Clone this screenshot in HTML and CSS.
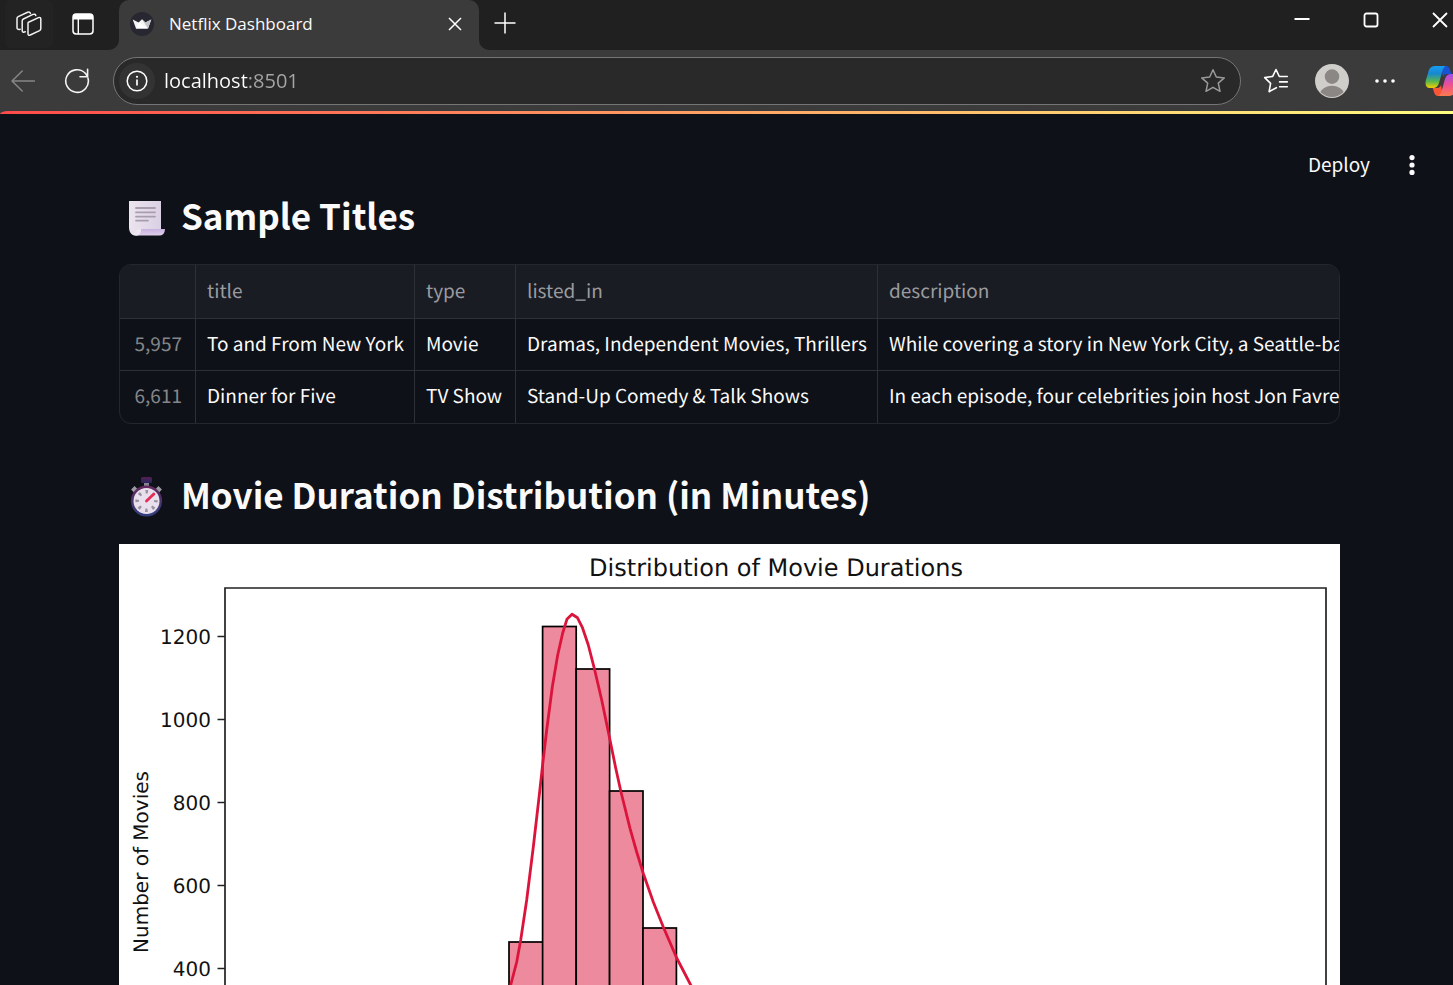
FILE: index.html
```html
<!DOCTYPE html>
<html lang="en">
<head>
<meta charset="utf-8">
<meta name="viewport" content="width=device-width, initial-scale=1">
<title>Netflix Dashboard</title>
<link rel="stylesheet" href="styles.css">
</head>
<body>
<header class="browser">
  <div class="tabstrip">
    <div class="tabstrip-left">
      <button class="icon-btn workspace" aria-label="Workspaces">
        <svg width="26" height="26" viewBox="0 0 26 26" fill="none" stroke="#f2f2f2" stroke-width="1.5" stroke-linejoin="round" stroke-linecap="round"><path d="M12.5 11.2 L22.5 6.6 Q24.8 5.9 24.8 8 V17.5 Q24.8 19 23.6 19.6 L14.2 24 Q12 24.8 12 22.8 V12.8 Q12 11.6 12.5 11.2Z"/><path d="M9.3 20.8 Q6.2 22 6.2 19.4 V10 Q6.2 8.6 7.4 8 L17 3.4 Q19.4 2.6 19.8 4.6"/><path d="M4.2 18.2 Q1 19 1 16.4 V7.6 Q1 6.2 2.2 5.6 L11.6 1.3 Q14 .6 14.4 2.4"/></svg>
      </button>
      <button class="icon-btn" aria-label="Tab actions">
        <svg width="22" height="22" viewBox="0 0 22 22"><rect x="1" y="1" width="20" height="20" rx="3.2" fill="none" stroke="#fff" stroke-width="1.5"/><path d="M1 6.5V4Q1 1 4 1H18Q21 1 21 4V6.5Z" fill="#fff"/><path d="M6.3 6V21" stroke="#fff" stroke-width="1.4"/></svg>
      </button>
    </div>
    <div class="tab">
      <svg width="24" height="24" viewBox="0 0 24 24"><circle cx="12" cy="12" r="12" fill="#262730"/><path d="M2.7 7.4 8.6 10.6 12 7.2 15.4 10.6 21.3 7.4 18 16.6H6Z" fill="#f4f4f4"/><path d="M12 7.2 15.4 10.6 21.3 7.4 18 16.6Z" fill="#c4c4c6"/><path d="M8.6 10.6 18 16.6H6Z" fill="#fff"/></svg>
      <span class="tab-title">Netflix Dashboard</span>
      <button class="icon-btn tab-close" aria-label="Close tab"><svg width="14" height="14" viewBox="0 0 14 14" stroke="#fff" stroke-width="1.5"><path d="M1 1 13 13M13 1 1 13"/></svg></button>
    </div>
    <div class="tabstrip-rest">
      <button class="icon-btn" aria-label="New tab"><svg width="22" height="22" viewBox="0 0 22 22" stroke="#fff" stroke-width="1.5"><path d="M11 .5V21.5M.5 11H21.5"/></svg></button>
      <div class="window-controls">
        <button class="icon-btn" aria-label="Minimize"><svg width="16" height="16" viewBox="0 0 16 16"><path d="M.5 7H15.5" stroke="#fff" stroke-width="2"/></svg></button>
        <button class="icon-btn" aria-label="Maximize"><svg width="16" height="16" viewBox="0 0 16 16"><rect x="1.5" y="1.5" width="13" height="13" rx="2" fill="none" stroke="#fff" stroke-width="1.8"/></svg></button>
        <button class="icon-btn" aria-label="Close window"><svg width="16" height="16" viewBox="0 0 16 16" stroke="#fff" stroke-width="1.8"><path d="M1 1 15 15M15 1 1 15"/></svg></button>
      </div>
    </div>
  </div>
  <div class="toolbar">
    <button class="icon-btn" aria-label="Back"><svg width="24" height="22" viewBox="0 0 24 22" fill="none" stroke="#868686" stroke-width="1.5" stroke-linecap="round" stroke-linejoin="round"><path d="M11.2 1 1 11 11.2 21M1 11H23.5"/></svg></button>
    <button class="icon-btn reload" aria-label="Reload"><svg width="26" height="26" viewBox="0 0 26 26" fill="none" stroke="#f4f4f4" stroke-width="1.6" stroke-linecap="round"><path d="M24 10.2A11.3 11.3 0 1 1 21.3 5.3L23.4 8.2M16 8.8H23.6V1.3"/></svg></button>
    <div class="address">
      <button class="icon-btn site-info" aria-label="Site information"><svg width="22" height="22" viewBox="0 0 22 22"><circle cx="11" cy="11" r="9.8" fill="none" stroke="#fff" stroke-width="1.5"/><path d="M11 9.6V15.5" stroke="#fff" stroke-width="1.7"/><circle cx="11" cy="6.8" r="1.1" fill="#fff"/></svg></button>
      <input class="address-input" type="text" value="localhost:8501" aria-label="Address">
      <button class="icon-btn" aria-label="Add to favorites"><svg width="26" height="26" viewBox="0 0 26 26" fill="none" stroke="#9a9a9a" stroke-width="1.5" stroke-linejoin="round"><path d="M13 1.8 16.3 9 24.3 9.9 18.3 15.1 20 23.3 13 19.3 6 23.3 7.7 15.1 1.7 9.9 9.7 9Z"/></svg></button>
    </div>
    <div class="toolbar-right">
      <button class="icon-btn" aria-label="Favorites"><svg width="26" height="26" viewBox="0 0 26 26" fill="none" stroke="#fff" stroke-width="1.6" stroke-linejoin="round" stroke-linecap="round"><path d="M13.4 19.7 6.1 23.7 7.6 15.4 1.7 9.6 9.7 8.4 13 1.5 16.3 8.5H24.3M16.6 13.9H24.3M16.6 18.8H24.3"/></svg></button>
      <button class="icon-btn" aria-label="Profile"><svg width="34" height="34" viewBox="0 0 34 34"><clipPath id="avatar"><circle cx="17" cy="17" r="16"/></clipPath><circle cx="17" cy="17" r="17" fill="#d0cecb"/><circle cx="17" cy="12.6" r="7.3" fill="#8b8784"/><ellipse cx="17" cy="32" rx="12.5" ry="10.2" fill="#8b8784" clip-path="url(#avatar)"/></svg></button>
      <button class="icon-btn" aria-label="Settings and more"><svg width="20" height="6" viewBox="0 0 20 6" fill="#fff"><circle cx="2" cy="3" r="1.8"/><circle cx="10" cy="3" r="1.8"/><circle cx="18" cy="3" r="1.8"/></svg></button>
      <button class="icon-btn copilot" aria-label="Copilot">
        <svg width="34" height="32" viewBox="0 0 34 32">
          <defs>
            <linearGradient id="cop-left" x1="0" y1="0" x2="0" y2="1"><stop offset="0" stop-color="#169df0"/><stop offset=".35" stop-color="#1688cf"/><stop offset=".7" stop-color="#58b64d"/><stop offset="1" stop-color="#f5d000"/></linearGradient>
            <linearGradient id="cop-right" x1="0" y1="0" x2="0" y2="1"><stop offset="0" stop-color="#a44df0"/><stop offset=".5" stop-color="#ee5090"/><stop offset="1" stop-color="#ff7a50"/></linearGradient>
          </defs>
          <path d="M16 1H21Q24 1 25 5L26.3 9H22Q19 9 18 12Z" fill="#1853d4"/>
          <path d="M18 31H13Q10 31 9 27L7.7 23H12Q15 23 16 20Z" fill="#fa5535"/>
          <path d="M10.5 1H21Q18.5 1.8 17.4 6L14 18Q12.5 23 8 23H4.8Q-.4 23 .7 16L3.6 6Q5 1 10.5 1Z" fill="url(#cop-left)"/>
          <path d="M23.5 31H13Q15.5 30.2 16.6 26L20 14Q21.5 9 26 9H29.2Q34.4 9 33.3 16L30.4 26Q29 31 23.5 31Z" fill="url(#cop-right)"/>
        </svg>
      </button>
    </div>
  </div>
</header>

<div class="app">
  <div class="decoration"></div>
  <div class="app-header">
    <button class="deploy">Deploy</button>
    <button class="icon-btn" aria-label="Main menu"><svg width="6" height="20" viewBox="0 0 6 20" fill="#fafafa"><circle cx="3" cy="2.6" r="2.6"/><circle cx="3" cy="10" r="2.6"/><circle cx="3" cy="17.4" r="2.6"/></svg></button>
  </div>
  <main class="content">
    <h2 class="heading">
      <svg class="heading-icon" width="40" height="40" viewBox="0 0 40 40" aria-hidden="true">
        <defs><linearGradient id="paper" x1="0" y1="0" x2="1" y2="0"><stop offset="0" stop-color="#ece4ee"/><stop offset="1" stop-color="#d9d0e4"/></linearGradient><linearGradient id="curl" x1="0" y1="0" x2="0" y2="1"><stop offset="0" stop-color="#c7b1df"/><stop offset="1" stop-color="#ded0ea"/></linearGradient></defs>
        <path d="M2 3H34V32L10 37.4Q2 37 2 30Z" fill="url(#paper)"/>
        <path d="M14 31Q14 37.6 8 37.6H32Q37.8 37.6 38 31Z" fill="url(#curl)"/>
        <path d="M3 34Q5 38 10 37.6Q14 36.8 14 31Q8 31 8 35Q5 36 3 34Z" fill="#eee8f0"/>
        <path d="M9 10H28M9 14.3H28M9 18.6H28M9 22.6H21" stroke="#a89daf" stroke-width="1.8" stroke-linecap="round"/>
      </svg>
      <span class="heading-text">Sample Titles</span>
    </h2>
    <div class="table-frame">
      <table class="data">
        <colgroup><col class="c-index"><col class="c-title"><col class="c-type"><col class="c-listed"><col></colgroup>
        <thead><tr><th scope="col" aria-label="index"></th><th scope="col">title</th><th scope="col">type</th><th scope="col">listed_in</th><th scope="col">description</th></tr></thead>
        <tbody>
          <tr><th scope="row">5,957</th><td>To and From New York</td><td>Movie</td><td>Dramas, Independent Movies, Thrillers</td><td>While covering a story in New York City, a Seattle-ba</td></tr>
          <tr><th scope="row">6,611</th><td>Dinner for Five</td><td>TV Show</td><td>Stand-Up Comedy &amp; Talk Shows</td><td>In each episode, four celebrities join host Jon Favrea</td></tr>
        </tbody>
      </table>
    </div>
    <h2 class="heading">
      <svg class="heading-icon" width="40" height="40" viewBox="0 0 40 40" aria-hidden="true">
        <defs><linearGradient id="watch" x1="0" y1="0" x2="0" y2="1"><stop offset="0" stop-color="#68275d"/><stop offset="1" stop-color="#30417f"/></linearGradient><linearGradient id="crown" x1="0" y1="0" x2="0" y2="1"><stop offset="0" stop-color="#542052"/><stop offset="1" stop-color="#28265e"/></linearGradient></defs>
        <path d="M17 5H22V11H17Z" fill="#85838f"/><rect x="14" y="0" width="11" height="6" rx="1.5" fill="url(#crown)"/>
        <path d="M5.5 14 9 10.5M33.5 14 30 10.5" stroke="#9b9aa3" stroke-width="4"/>
        <circle cx="19.5" cy="24" r="15.6" fill="url(#watch)"/><circle cx="19.5" cy="24" r="13" fill="#e9e0ee"/>
        <circle cx="19.5" cy="24" r="9.3" fill="none" stroke="#99929f" stroke-width="3.6" stroke-dasharray="2.5 4.8" stroke-dashoffset="1.25"/>
        <path d="M19.5 24 26.8 17" stroke="#e92b59" stroke-width="2.8" stroke-linecap="round"/>
      </svg>
      <span class="heading-text">Movie Duration Distribution (in Minutes)</span>
    </h2>
    <svg class="chart" viewBox="119 544 1221 732" role="img" aria-label="Distribution of Movie Durations">
      <rect x="119" y="544" width="1221" height="732" fill="#fff"/>
      <g class="bars">
        <rect x="509" y="942" width="34" height="276"/>
        <rect x="542.6" y="626.5" width="33.6" height="592"/>
        <rect x="576.2" y="669" width="33.4" height="549"/>
        <rect x="609.6" y="791" width="33.4" height="427"/>
        <rect x="643" y="928" width="33.4" height="290"/>
      </g>
      <path class="kde" d="M510.7 985 516.7 962 520.7 940 526.7 900 533.3 847 539.3 795 542.7 764 546.7 730 552.3 687 557.7 655 562.7 633 566.9 619.3 572 614.3 577.5 617.8 582.3 627.3 588.3 645 594.3 668.3 601.7 700 610 740 615.7 768 621 792 630 828.3 636.7 852 643.3 873.5 653.3 902 663.3 927 676.7 958 690.7 985 705 1009"/>
      <path class="axes" d="M225 1218V588H1326V1218M217.5 636.5H225M217.5 719.5H225M217.5 802.5H225M217.5 885.5H225M217.5 968.5H225"/>
      <text class="chart-title" x="776" y="576">Distribution of Movie Durations</text>
      <g class="ticks">
        <text x="211" y="644">1200</text><text x="211" y="727">1000</text><text x="211" y="810">800</text><text x="211" y="893">600</text><text x="211" y="976">400</text>
      </g>
      <text class="axis-label" transform="translate(148 862) rotate(-90)">Number of Movies</text>
    </svg>
  </main>
</div>
</body>
</html>
```
FILE: styles.css
```css
* { box-sizing: border-box; }

body {
  margin: 0;
  height: 100vh;
  overflow: hidden;
  display: flex;
  flex-direction: column;
  background: #0e1117;
  color: #fafafa;
  font-family: "Noto Sans CJK SC", "Noto Sans", sans-serif;
}

button {
  border: 0;
  padding: 0;
  background: none;
  color: inherit;
  font: inherit;
}

.icon-btn {
  display: flex;
  align-items: center;
  justify-content: center;
  flex: none;
}

svg { display: block; flex: none; }

.browser {
  flex: none;
  background: #3b3b3b;
  font-family: "Open Sans", "Noto Sans", sans-serif;
}

.tabstrip { display: flex; height: 50px; background: #3b3b3b; }

.tabstrip-left {
  display: flex;
  align-items: center;
  gap: 19px;
  width: 119px;
  padding: 0 0 2px 5px;
  background: #202020;
  border-bottom-right-radius: 10px;
}

.workspace { width: 48px; height: 48px; border-radius: 6px; background: #232323; }

.tab {
  display: flex;
  align-items: center;
  width: 360px;
  padding: 0 17px 2px 11px;
  background: linear-gradient(#202020 50%, #3b3b3b 50%);
  position: relative;
  z-index: 0;
}

.tab::before {
  content: "";
  position: absolute;
  inset: 0;
  z-index: -1;
  border-radius: 10px 10px 0 0;
  background: #3b3b3b;
}

.tab-title { flex: 1; padding-left: 15px; font-size: 17px; line-height: 24px; }

.tabstrip-rest {
  flex: 1;
  display: flex;
  justify-content: space-between;
  padding: 0 5px 4px 15px;
  background: #202020;
  border-bottom-left-radius: 10px;
}

.window-controls { display: flex; gap: 53px; padding-bottom: 6px; }

.toolbar {
  display: flex;
  align-items: center;
  height: 61px;
  padding-left: 11px;
  overflow: hidden;
}

.reload { margin: 0 23px 0 29px; }

.address {
  flex: 1;
  display: flex;
  align-items: center;
  height: 48px;
  padding: 0 14px 0 5px;
  border: 1px solid #757575;
  border-radius: 24px;
  background: #292929;
}

.site-info { width: 36px; height: 36px; border-radius: 50%; background: #333; }

.address-input {
  flex: 1;
  min-width: 0;
  height: 32px;
  padding: 0;
  margin-left: 9px;
  border: 0;
  outline: 0;
  font-family: "Open Sans", "Noto Sans", sans-serif;
  font-size: 20px;
  line-height: 32px;
  color: transparent;
  background: linear-gradient(90deg, #fff 84px, #a6a6a6 84px);
  -webkit-background-clip: text;
  background-clip: text;
}

.toolbar-right {
  display: flex;
  align-items: center;
  gap: 26px;
  padding-left: 22px;
  margin-right: -6px;
}

.copilot { margin-left: 4px; }

.app { flex: 1; min-height: 0; overflow: hidden; background: #3b3b3b; }

.decoration {
  height: 3px;
  border-top-left-radius: 8px 3px;
  background: linear-gradient(90deg, #ff4b4b, #fffd80);
}

.app-header {
  display: flex;
  align-items: center;
  justify-content: flex-end;
  gap: 39px;
  height: 76px;
  padding: 26px 38px 0 0;
  background: #0e1117;
}

.deploy { padding-bottom: 2px; font-size: 19px; line-height: 24px; }

.content { padding: 0 113px 0 119px; background: #0e1117; }

.heading {
  display: flex;
  align-items: center;
  gap: 14px;
  height: 56px;
  margin: 0;
  padding-left: 8px;
  font-size: 35px;
  line-height: 48px;
  font-weight: 700;
}

.heading-text { padding-bottom: 6px; }

.table-frame {
  margin: 18px 0 45px;
  border: 1px solid #25272e;
  border-radius: 12px;
  overflow: hidden;
}

.data {
  width: 100%;
  table-layout: fixed;
  border-collapse: separate;
  border-spacing: 0;
  font-size: 19px;
  line-height: 24px;
  text-rendering: geometricPrecision;
}

.c-index { width: 76px; }
.c-title { width: 219px; }
.c-type { width: 101px; }
.c-listed { width: 362px; }

.data th,
.data td {
  height: 52px;
  padding: 0 0 2px 11px;
  border-right: 1px solid #2e3037;
  border-bottom: 1px solid #2e3037;
  font-weight: 400;
  text-align: left;
  white-space: nowrap;
  overflow: hidden;
}

.data thead th { height: 54px; background: #1a1c24; color: #9a9b9f; }
.data tbody th { padding: 0 13px 2px 0; text-align: right; color: #85868a; }
.data tr > :last-child { border-right: 0; }
.data tbody tr:last-child > * { border-bottom: 0; }

.chart {
  width: 100%;
  height: auto;
  margin-top: 19px;
  font-family: "DejaVu Sans", sans-serif;
  text-rendering: geometricPrecision;
}
.bars { fill: #ed8a9d; stroke: #000; stroke-width: 1.7; }
.kde { fill: none; stroke: #dc143c; stroke-width: 2.8; stroke-linejoin: round; }
.axes { fill: none; stroke: #222; stroke-width: 1.7; }
.chart-title { font-size: 24px; text-anchor: middle; fill: #111; }
.ticks { font-size: 20px; text-anchor: end; fill: #111; }
.axis-label { font-size: 20px; text-anchor: middle; fill: #111; }
```
